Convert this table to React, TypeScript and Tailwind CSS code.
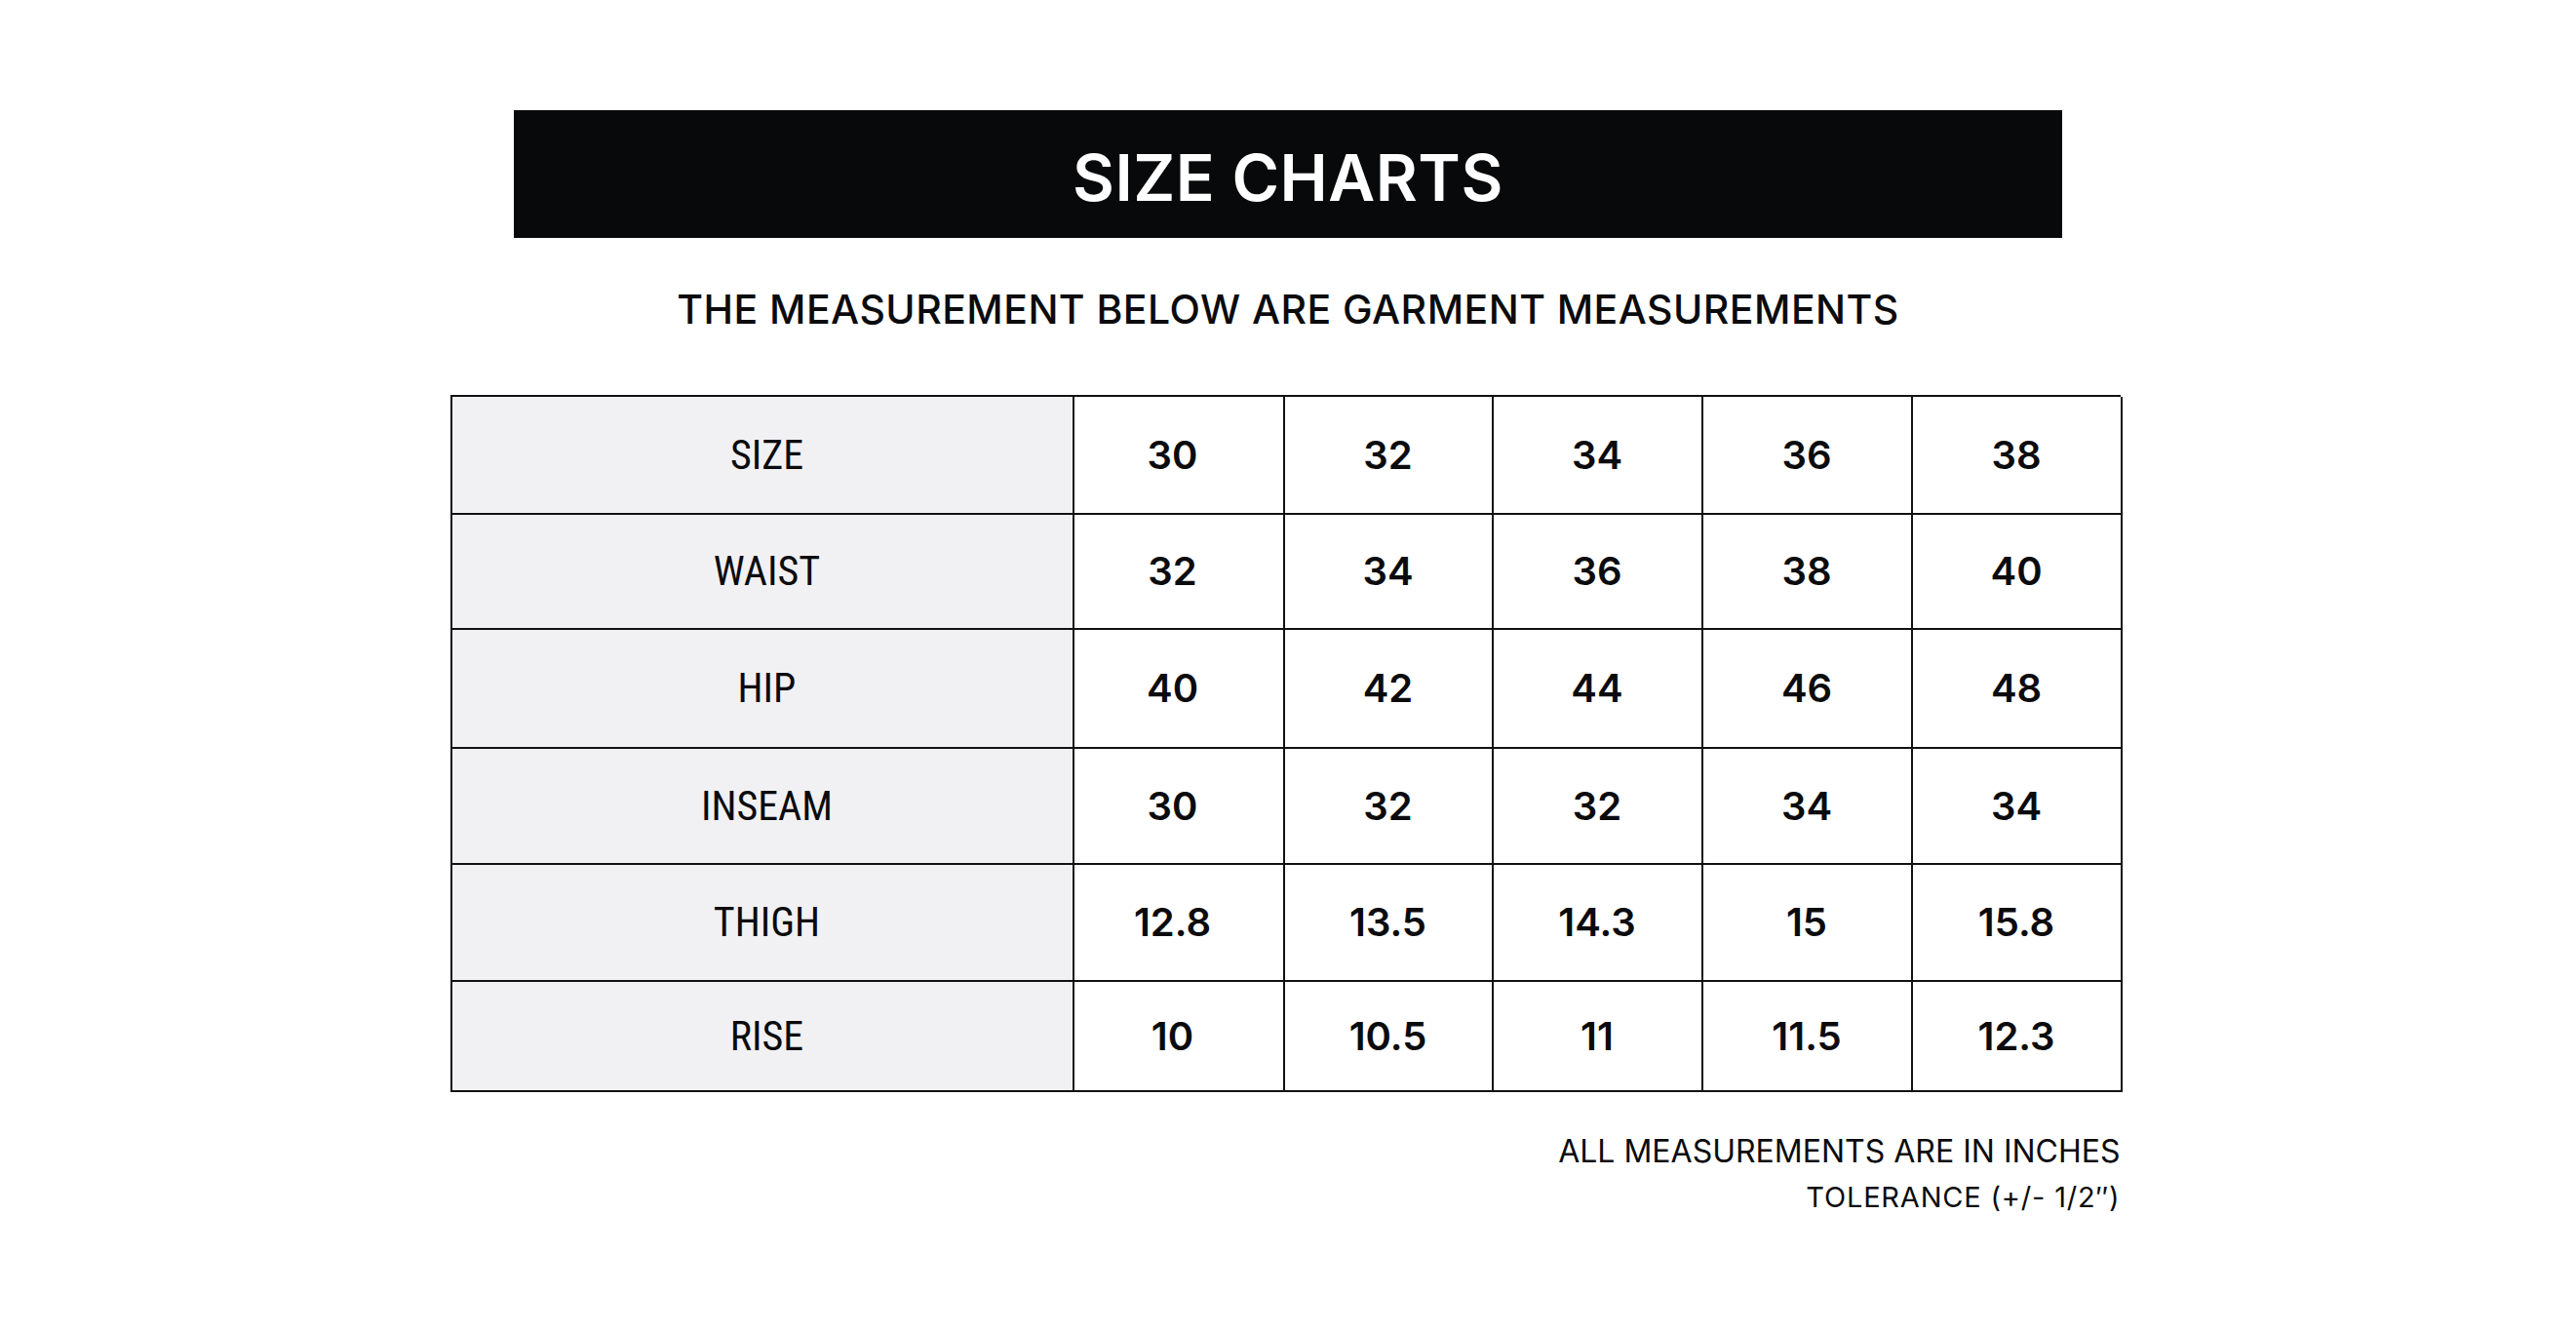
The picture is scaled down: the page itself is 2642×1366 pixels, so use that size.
import React from 'react';

const labels = ['SIZE', 'WAIST', 'HIP', 'INSEAM', 'THIGH', 'RISE'];
const rows: string[][] = [
  ['30', '32', '34', '36', '38'],
  ['32', '34', '36', '38', '40'],
  ['40', '42', '44', '46', '48'],
  ['30', '32', '32', '34', '34'],
  ['12.8', '13.5', '14.3', '15', '15.8'],
  ['10', '10.5', '11', '11.5', '12.3'],
];
const rowHeights = ['h-[121px]', 'h-[118px]', 'h-[122px]', 'h-[119px]', 'h-[120px]', 'h-[113px]'];

const narrow = { fontFamily: '"Liberation Sans Narrow", "Roboto Condensed", "DejaVu Sans Condensed", "Liberation Sans", sans-serif' };
const geo = { fontFamily: 'Inter, "Noto Sans", sans-serif' };

export default function App() {
  return (
    <div className="w-[2642px] h-[1366px] bg-white text-[#0b0b0d] flex flex-col items-center">
      <div className="mt-[113px] w-[1588px] h-[131px] pt-[6px] bg-[#08090b] flex items-center justify-center">
        <h1 className="text-white text-[66px] font-semibold leading-none tracking-[0.5px]" style={geo}>SIZE CHARTS</h1>
      </div>

      <p className="mt-[53px] text-[41px] font-medium leading-none tracking-[0.45px]" style={geo}>
        THE MEASUREMENT BELOW ARE GARMENT MEASUREMENTS
      </p>

      <div className="mt-[67px] mr-[6px] w-[1713px] border-l-2 border-t-2 border-[#111]">
        {labels.map((label, i) => (
          <div key={label} className={`grid grid-cols-[638px_216px_214px_215px_215px_215px] ${rowHeights[i]}`}>
            <div className="bg-[#f1f1f3] border-r-2 border-b-2 border-[#111] flex items-center justify-center pl-[10px]">
              <span className="text-[42px] leading-none" style={narrow}>{label}</span>
            </div>
            {rows[i].map((v, j) => (
              <div key={j} className={`border-r-2 border-b-2 border-[#111] flex items-center justify-center ${j === 0 ? 'pr-[12px]' : ''}`}>
                <span className="text-[40px] font-semibold leading-none" style={geo}>{v}</span>
              </div>
            ))}
          </div>
        ))}
      </div>

      <div className="w-[1713px] mr-[6px] mt-[45px] flex flex-col items-end" style={geo}>
        <p className="text-[32px] leading-none">ALL MEASUREMENTS ARE IN INCHES</p>
        <p className="mt-[16px] text-[29px] leading-none tracking-[0.8px]">TOLERANCE (+/- 1/2″)</p>
      </div>
    </div>
  );
}
